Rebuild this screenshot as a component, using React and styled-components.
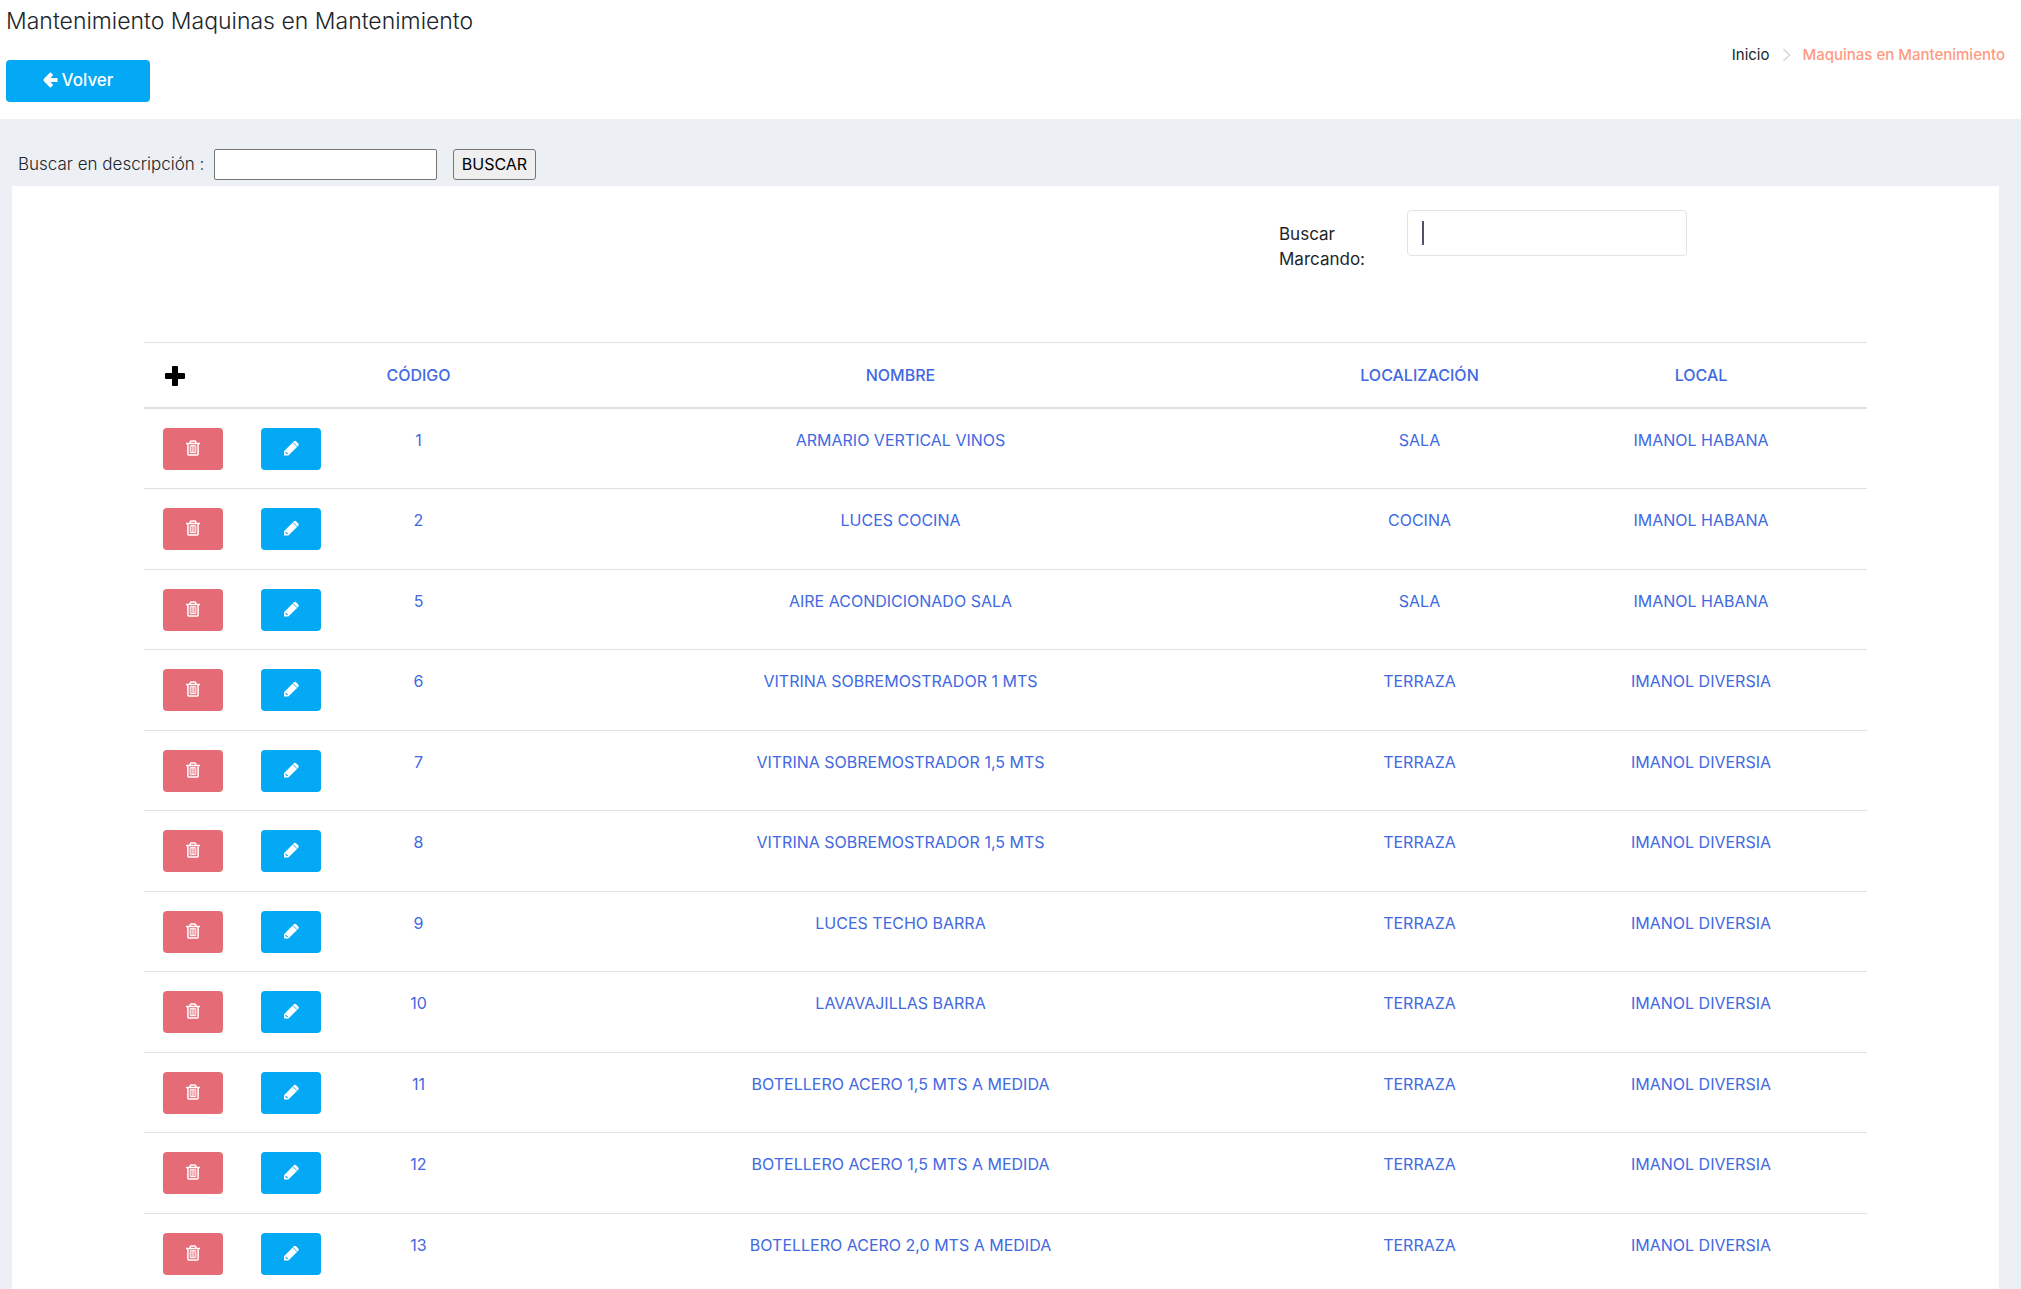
import React, { useState } from 'react';
import styled, { createGlobalStyle } from 'styled-components';

const GlobalStyle = createGlobalStyle`
  *, *::before, *::after {
    box-sizing: border-box;
  }
  body {
    margin: 0;
    background: #ecf0f5;
    color: #212529;
    font-family: Inter, 'Liberation Sans', sans-serif;
    font-size: 16px;
    font-weight: 300;
    line-height: 25px;
  }
  input, button {
    font-family: inherit;
  }
`;

const Header = styled.header`
  display: flex;
  justify-content: space-between;
  height: 119px;
  padding: 6px 16px 0 6px;
  background: #fff;
`;
const Title = styled.h1`
  margin: 0 0 24px;
  font-size: 23px;
  font-weight: 300;
  line-height: 30px;
`;
const Button = styled.button`
  display: inline-flex;
  align-items: center;
  justify-content: center;
  gap: 4px;
  width: ${props => (props.$wide ? 144 : 60)}px;
  height: 42px;
  padding: 0 0 2px;
  border: 0;
  border-radius: 4px;
  background: ${props => (props.$danger ? '#e56b77' : '#04a9f5')};
  color: #fff;
  font-size: 17px;
  font-weight: 500;
  cursor: pointer;
`;
const Breadcrumb = styled.nav`
  display: flex;
  align-items: center;
  gap: 12px;
  height: 25px;
  margin-top: 36px;
  font-size: 15px;
`;
const Crumb = styled.a`
  color: ${props => (props.$active ? '#ff9a82' : '#212529')};
  font-weight: ${props => (props.$active ? 500 : 400)};
  text-decoration: none;
`;

const SearchBar = styled.form`
  display: flex;
  align-items: center;
  padding: 30px 18px 6px;
`;
const SearchLabel = styled.label`
  width: 192px;
  font-size: 17px;
`;
const SearchInput = styled.input`
  width: 223px;
  height: 31px;
  margin: 0 16px 0 4px;
  padding: 0 4px;
  border: 1px solid #767676;
  border-radius: 2px;
  background: #fff;
  font-size: 16px;
`;
const SearchButton = styled.button`
  width: 83px;
  height: 31px;
  padding: 0 0 2px;
  border: 1px solid #767676;
  border-radius: 3px;
  background: #efefef;
  color: #000;
  font-size: 16px;
  font-weight: 400;
`;

const Panel = styled.main`
  margin: 0 22px 0 12px;
  padding: 24px 132px 0;
  background: #fff;
`;
const Filter = styled.div`
  display: flex;
  justify-content: flex-end;
  height: 132px;
  padding-right: 180px;
`;
const FilterLabel = styled.label`
  width: 128px;
  padding: 12px 28px 0 0;
  font-size: 17px;
  font-weight: 400;
`;
const FilterBox = styled.div`
  position: relative;
  width: 280px;
  height: 46px;

  &::after {
    content: '';
    position: absolute;
    top: 11px;
    left: 15px;
    width: 2px;
    height: 24px;
    background: #50506a;
  }
`;
const FilterInput = styled.input`
  width: 100%;
  height: 100%;
  padding: 0 15px;
  border: 1px solid #e3e3e3;
  border-radius: 4px;
  outline: 0;
  background: #fff;
  font-size: 16px;
  caret-color: transparent;
`;

const Table = styled.table`
  width: 100%;
  table-layout: fixed;
  border-collapse: separate;
  border-spacing: 0;
  color: #4169e1;
  text-align: center;
`;
const HeadCell = styled.th`
  width: ${props => props.$width};
  height: 67px;
  padding: 0 19px;
  border-top: 1px solid #dee2e6;
  border-bottom: 2px solid #dee2e6;
  font-weight: 500;
`;
const Row = styled.tr`
  height: 80px;

  &:nth-child(even) {
    height: 81px;
  }
`;
const Cell = styled.td`
  padding: 19px 19px 0;
  border-bottom: 1px solid #dee2e6;
  font-weight: 400;
  vertical-align: top;
`;
const ActionCell = styled(Cell)`
  line-height: 0;
`;
const AddButton = styled.button`
  display: block;
  padding: 1px 0 0 1px;
  border: 0;
  background: none;
  color: #000;
  line-height: 0;
  cursor: pointer;
`;

const ArrowIcon = () => (
  <svg width="15" height="16" viewBox="0 0 15 16" fill="none" stroke="currentColor" strokeWidth="4" strokeLinejoin="round" aria-hidden="true">
    <path d="M8.8 1.6 2.6 8l6.2 6.4M3 8h11.5" />
  </svg>
);
const ChevronIcon = () => (
  <svg width="9" height="14" viewBox="0 0 9 14" fill="none" stroke="#ccd3da" strokeWidth="1.2" aria-hidden="true">
    <path d="m1.5 1 6 6-6 6" />
  </svg>
);
const PlusIcon = () => (
  <svg width="22" height="22" viewBox="0 0 22 22" fill="currentColor" aria-hidden="true">
    <path d="M9 1h4a1 1 0 0 1 1 1v6h6a1 1 0 0 1 1 1v4a1 1 0 0 1-1 1h-6v6a1 1 0 0 1-1 1H9a1 1 0 0 1-1-1v-6H2a1 1 0 0 1-1-1V9a1 1 0 0 1 1-1h6V2a1 1 0 0 1 1-1z" />
  </svg>
);
const TrashIcon = () => (
  <svg width="14" height="16" viewBox="0 0 14 16" fill="none" stroke="currentColor" aria-hidden="true">
    <path strokeWidth="1.5" d="M4.2 3V2q0-1 1-1h3.6q1 0 1 1v1M0 3.4h14M1.9 3.5v10.4q0 1.2 1.2 1.2h7.8q1.2 0 1.2-1.2V3.5" />
    <path strokeWidth="1" d="M4.2 5.7h5.6v7H4.2zM6.1 5.7v7M7.9 5.7v7" />
  </svg>
);
const PencilIcon = () => (
  <svg width="18" height="18" viewBox="0 0 18 18" aria-hidden="true">
    <path fill="currentColor" d="M2 12.2 11.9 2.3q1-1 2.2 0l2.2 2.2q1 1.1 0 2.2L6.4 16.6H2z" />
    <path fill="none" stroke="#04a9f5" strokeWidth="0.9" d="m10.8 3.4 4.4 4.4" />
    <path fill="#04a9f5" d="m3.6 12.4 2.6 2.4-1.3.4-1.5-1.5z" />
  </svg>
);

const machines = [
  { code: 1, name: 'ARMARIO VERTICAL VINOS', location: 'SALA', place: 'IMANOL HABANA' },
  { code: 2, name: 'LUCES COCINA', location: 'COCINA', place: 'IMANOL HABANA' },
  { code: 5, name: 'AIRE ACONDICIONADO SALA', location: 'SALA', place: 'IMANOL HABANA' },
  { code: 6, name: 'VITRINA SOBREMOSTRADOR 1 MTS', location: 'TERRAZA', place: 'IMANOL DIVERSIA' },
  { code: 7, name: 'VITRINA SOBREMOSTRADOR 1,5 MTS', location: 'TERRAZA', place: 'IMANOL DIVERSIA' },
  { code: 8, name: 'VITRINA SOBREMOSTRADOR 1,5 MTS', location: 'TERRAZA', place: 'IMANOL DIVERSIA' },
  { code: 9, name: 'LUCES TECHO BARRA', location: 'TERRAZA', place: 'IMANOL DIVERSIA' },
  { code: 10, name: 'LAVAVAJILLAS BARRA', location: 'TERRAZA', place: 'IMANOL DIVERSIA' },
  { code: 11, name: 'BOTELLERO ACERO 1,5 MTS A MEDIDA', location: 'TERRAZA', place: 'IMANOL DIVERSIA' },
  { code: 12, name: 'BOTELLERO ACERO 1,5 MTS A MEDIDA', location: 'TERRAZA', place: 'IMANOL DIVERSIA' },
  { code: 13, name: 'BOTELLERO ACERO 2,0 MTS A MEDIDA', location: 'TERRAZA', place: 'IMANOL DIVERSIA' },
];

const MachineRow = ({ machine }) => (
  <Row>
    <ActionCell>
      <Button type="button" $danger aria-label={`Eliminar ${machine.name}`}>
        <TrashIcon />
      </Button>
    </ActionCell>
    <ActionCell>
      <Button type="button" aria-label={`Editar ${machine.name}`}>
        <PencilIcon />
      </Button>
    </ActionCell>
    <Cell>{machine.code}</Cell>
    <Cell>{machine.name}</Cell>
    <Cell>{machine.location}</Cell>
    <Cell>{machine.place}</Cell>
  </Row>
);

const App = () => {
  const [filter, setFilter] = useState('');
  const rows = machines.filter(machine => machine.name.includes(filter.toUpperCase()));

  return (
    <>
      <GlobalStyle />
      <Header>
        <div>
          <Title>Mantenimiento Maquinas en Mantenimiento</Title>
          <Button type="button" $wide>
            <ArrowIcon />
            Volver
          </Button>
        </div>
        <Breadcrumb>
          <Crumb href="#inicio">Inicio</Crumb>
          <ChevronIcon />
          <Crumb href="#maquinas" $active>Maquinas en Mantenimiento</Crumb>
        </Breadcrumb>
      </Header>
      <SearchBar onSubmit={event => event.preventDefault()}>
        <SearchLabel htmlFor="description">Buscar en descripción :</SearchLabel>
        <SearchInput id="description" type="text" />
        <SearchButton type="submit">BUSCAR</SearchButton>
      </SearchBar>
      <Panel>
        <Filter>
          <FilterLabel htmlFor="filter">Buscar Marcando:</FilterLabel>
          <FilterBox>
            <FilterInput
              id="filter"
              type="text"
              value={filter}
              onChange={event => setFilter(event.target.value)}
            />
          </FilterBox>
        </Filter>
        <Table>
          <thead>
            <tr>
              <HeadCell $width="98px">
                <AddButton type="button" aria-label="Añadir">
                  <PlusIcon />
                </AddButton>
              </HeadCell>
              <HeadCell $width="98px" />
              <HeadCell $width="157px">CÓDIGO</HeadCell>
              <HeadCell>NOMBRE</HeadCell>
              <HeadCell $width="231px">LOCALIZACIÓN</HeadCell>
              <HeadCell $width="332px">LOCAL</HeadCell>
            </tr>
          </thead>
          <tbody>
            {rows.map(machine => (
              <MachineRow key={machine.code} machine={machine} />
            ))}
          </tbody>
        </Table>
      </Panel>
    </>
  );
};

export default App;
